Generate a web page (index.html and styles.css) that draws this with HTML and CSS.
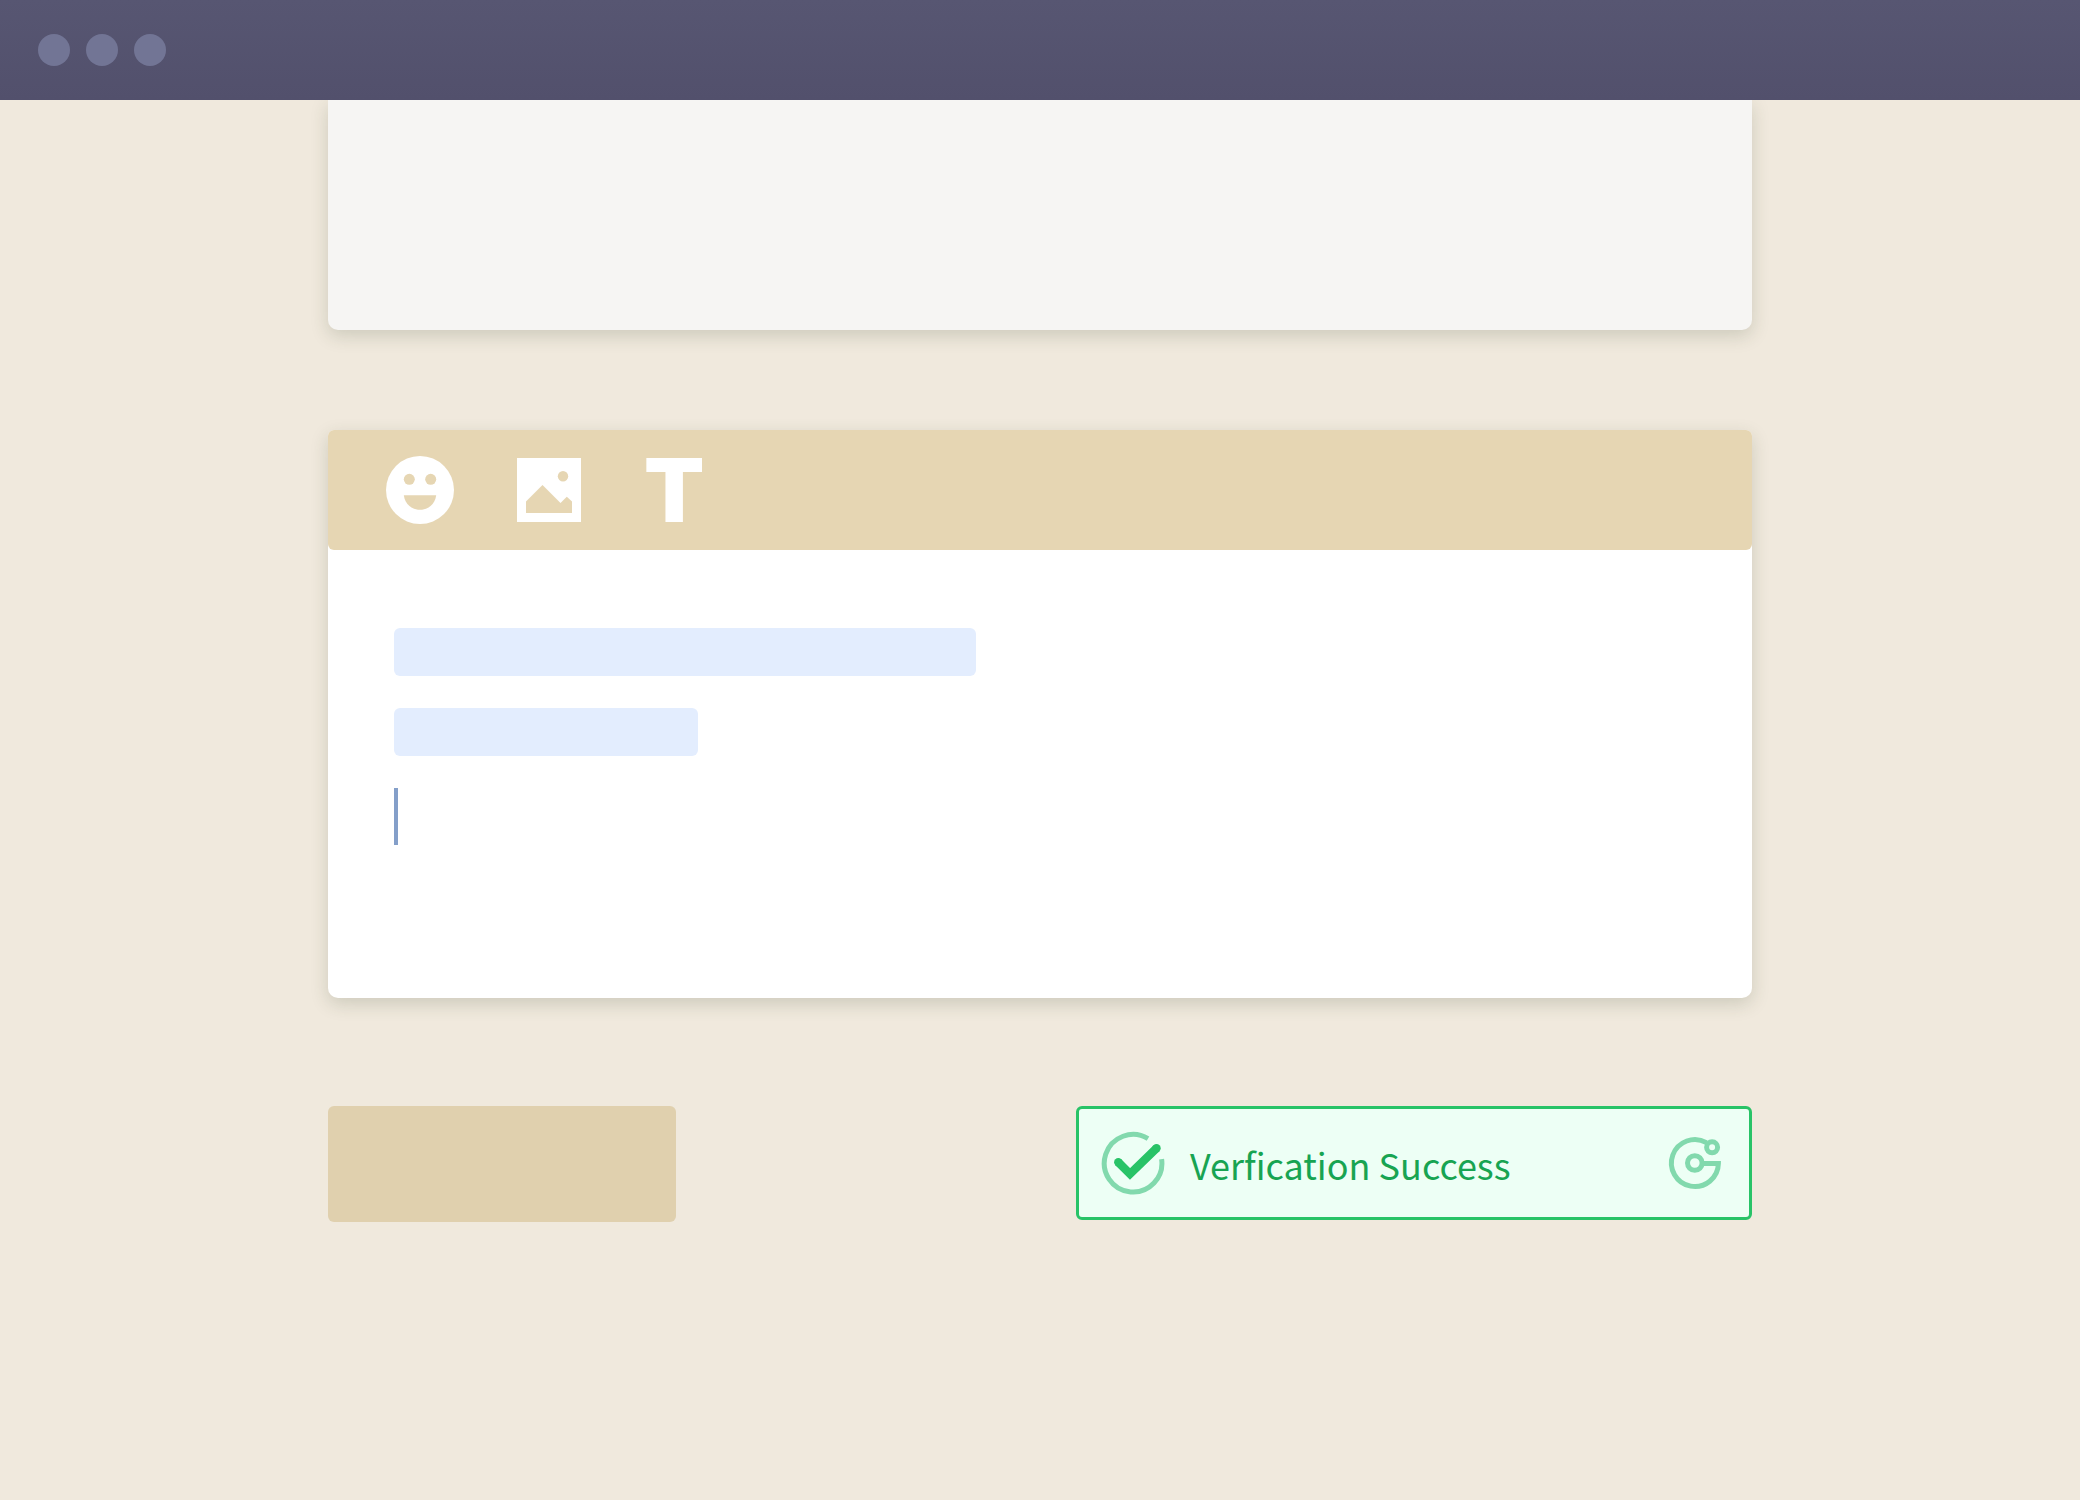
FILE: index.html
```html
<!DOCTYPE html>
<html lang="en">
  <head>
    <meta charset="UTF-8" />
    <meta name="viewport" content="width=device-width, initial-scale=1.0" />
    <title>Post a comment</title>

    <link rel="stylesheet" href="styles.css">
  </head>
  <body>
    <!-- WINDOW BAR -->
    <header class="window-bar">
      <span class="dot"></span>
      <span class="dot"></span>
      <span class="dot"></span>
    </header>

    <main class="page">
      <!-- PREVIOUS POST -->
      <section class="card post"></section>

      <!-- EDITOR -->
      <section class="card editor">
        <div class="toolbar">
          <button type="button" class="tool" aria-label="Emoji">
            <svg width="68" height="68" viewBox="0 0 68 68">
              <circle cx="34" cy="34" r="34" fill="#fff" />
              <g fill="#e6d6b3">
                <circle cx="23.3" cy="23.3" r="5.5" />
                <circle cx="44.7" cy="23.3" r="5.5" />
                <path d="M17.8 39.2h32.4C49 48 42.5 53.8 34 53.8S19 48 17.8 39.2z" />
              </g>
            </svg>
          </button>
          <button type="button" class="tool" aria-label="Image">
            <svg width="64" height="64" viewBox="0 0 64 64">
              <path fill="#fff" d="M0 0h64v64H0z" />
              <g fill="#e6d6b3">
                <circle cx="46" cy="18.2" r="5.2" />
                <path d="M9 43.5 25.5 27l18 18 6.3-6.3L55 43.5V55H9z" />
              </g>
            </svg>
          </button>
          <button type="button" class="tool tool-text" aria-label="Text">T</button>
        </div>
        <div class="editor-body">
          <div class="line line-long"></div>
          <div class="line line-short"></div>
          <div class="cursor"></div>
        </div>
      </section>

      <!-- ACTIONS -->
      <div class="actions">
        <button type="button" class="submit" aria-label="Submit"></button>

        <div class="captcha" role="status">
          <svg width="64" height="64" viewBox="0 0 64 64" fill="none">
            <path
              d="M47 7.6A28.8 28.8 0 1 0 60.6 28.2"
              stroke="#82d9ad"
              stroke-width="5"
            />
            <path
              d="M17.3 31.2 29 42.9 55.5 17.2"
              stroke="#28c367"
              stroke-width="8.4"
            />
            <circle cx="17.3" cy="31.2" r="4.2" fill="#28c367" />
            <circle cx="55.5" cy="17.2" r="4.2" fill="#28c367" />
          </svg>
          <span class="captcha-text">Verfication Success</span>
          <svg
            width="64"
            height="64"
            viewBox="0 0 64 64"
            fill="none"
            stroke="#82d9ad"
            stroke-width="5"
          >
            <path d="M39.5 32.4h15.9A23.5 23.5 0 1 1 43.5 11.6" />
            <circle cx="31.8" cy="32" r="7.3" />
            <circle cx="49.1" cy="16.3" r="5.5" />
          </svg>
        </div>
      </div>
    </main>
  </body>
</html>
```
FILE: styles.css
```css
*,
*::before,
*::after {
  box-sizing: border-box;
}

body {
  margin: 0;
  min-height: 100vh;
  background-color: #f0e9dd;
  font-family: "Noto Sans CJK SC", sans-serif;
}

button {
  padding: 0;
  border: 0;
  background: none;
  cursor: pointer;
}

svg {
  display: block;
  flex-shrink: 0;
}

/* WINDOW BAR */
.window-bar {
  display: flex;
  align-items: center;
  gap: 16px;
  height: 100px;
  padding: 0 38px;
  background: linear-gradient(#575672, #52506c);
}
.dot {
  width: 32px;
  height: 32px;
  border-radius: 50%;
  background-color: #727595;
}

/* PAGE */
.page {
  width: 90%;
  max-width: 1424px;
  margin: 0 auto;
}

.card {
  border-radius: 10px;
  background-color: #fff;
  box-shadow: 0 6px 18px rgba(50, 66, 40, 0.18);
}

/* PREVIOUS POST - cut off by the window bar */
.post {
  height: 230px;
  border-radius: 0 0 10px 10px;
  background-color: #f6f5f3;
  clip-path: inset(0 -30px -30px);
}

/* EDITOR */
.editor {
  margin-top: 100px;
  border-radius: 6px 6px 10px 10px;
}
.toolbar {
  display: flex;
  align-items: center;
  gap: 63px;
  height: 120px;
  padding: 0 58px;
  border-radius: 6px;
  background-color: #e6d6b3;
}
.tool-text {
  color: #fff;
  font-family: Inter, sans-serif;
  font-size: 88px;
  font-weight: 900;
  line-height: 88px;
}
.editor-body {
  display: flex;
  flex-direction: column;
  gap: 32px;
  min-height: 448px;
  padding: 78px 66px;
}
.line {
  height: 48px;
  border-radius: 6px;
  background-color: #e3edfe;
}
.line-long {
  width: 582px;
  max-width: 100%;
}
.line-short {
  width: 304px;
  max-width: 60%;
}
.cursor {
  width: 4px;
  height: 57px;
  background-color: #849fc9;
}

/* ACTIONS */
.actions {
  display: flex;
  flex-wrap: wrap;
  align-items: flex-start;
  justify-content: space-between;
  gap: 32px;
  margin-top: 108px;
}
.submit {
  width: 348px;
  height: 116px;
  border-radius: 6px;
  background-color: #e0d0ae;
}
.captcha {
  display: flex;
  align-items: center;
  gap: 25px;
  width: 676px;
  max-width: 100%;
  height: 114px;
  padding: 0 22px;
  border: 3px solid #28c367;
  border-radius: 6px;
  background-color: #edfff5;
}
.captcha-text {
  flex: 1;
  padding-top: 2px;
  color: #18a452;
  font-size: 36px;
  line-height: 56px;
}
```
